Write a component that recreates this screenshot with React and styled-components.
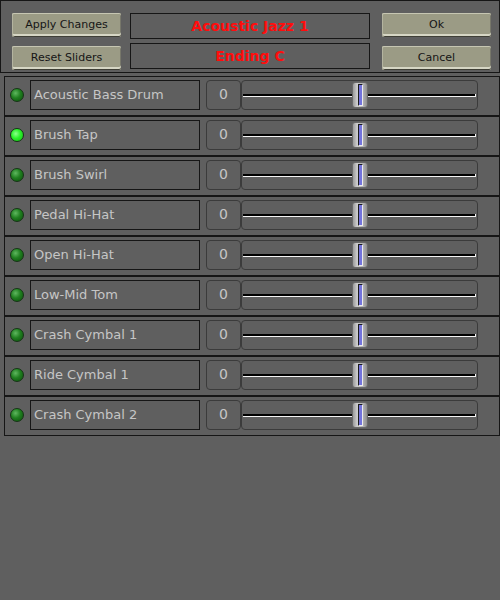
import React from "react";
import styled, { createGlobalStyle } from "styled-components";

const GlobalStyle = createGlobalStyle`
  html, body {
    margin: 0;
    padding: 0;
    background: #5f5f5f;
    font-family: "DejaVu Sans", "Liberation Sans", sans-serif;
  }
  #root {
    width: 500px;
    height: 600px;
    background: #5f5f5f;
  }
`;

const Header = styled.div`
  box-sizing: border-box;
  width: 500px;
  height: 73px;
  border: 1px solid #161616;
  padding: 12px 0 0 11px;
  display: flex;
  align-items: flex-start;
`;

const ButtonColumn = styled.div`
  display: flex;
  flex-direction: column;
  gap: 9px;
  margin-left: ${(p) => p.$offset || 0}px;
`;

const Button = styled.button`
  box-sizing: border-box;
  width: 109px;
  height: 24px;
  padding: 0 0 1px;
  border: none;
  border-radius: 2px;
  background: #9b9b85;
  color: #151515;
  font-family: "DejaVu Sans", sans-serif;
  font-size: 11px;
  box-shadow: inset 0 1px 0 #c6c6b2, inset 1px 0 0 #b4b4a0,
    inset 0 -1px 0 #3f3f36, inset 0 -3px 0 #d6d6c4, inset -1px 0 0 #77776a;
`;

const TitleColumn = styled.div`
  display: flex;
  flex-direction: column;
  gap: 4px;
  margin-left: 9px;
`;

const Title = styled.div`
  box-sizing: border-box;
  width: 240px;
  height: 26px;
  border: 1px solid #161616;
  color: #ff0d0d;
  font-weight: bold;
  font-size: 14px;
  display: flex;
  align-items: center;
  justify-content: center;
`;

const Panel = styled.div`
  margin: 3px 0 0 4px;
  width: 496px;
`;

const Row = styled.div`
  box-sizing: border-box;
  height: 40px;
  border: 1px solid #161616;
  display: flex;
  align-items: flex-start;
  padding: 3px 0 0 5px;
`;

const Led = styled.div`
  box-sizing: border-box;
  width: 14px;
  height: 14px;
  margin-top: 8px;
  border-radius: 50%;
  border: 1px solid #163516;
  background: ${(p) =>
    p.$on
      ? "radial-gradient(circle at 40% 40%, #8dff8d 0%, #2af02a 45%, #14b814 100%)"
      : "radial-gradient(circle at 38% 35%, #5fb75f 0%, #1f7f1f 45%, #0c4d0c 100%)"};
`;

const NameBox = styled.div`
  box-sizing: border-box;
  width: 170px;
  height: 30px;
  margin-left: 6px;
  border: 1px solid #161616;
  padding: 0 0 2px 3px;
  color: #c6c6c6;
  font-size: 13px;
  display: flex;
  align-items: center;
`;

const ValueBox = styled.div`
  box-sizing: border-box;
  width: 35px;
  height: 30px;
  margin-left: 6px;
  border: 1px solid #3b3b3b;
  border-radius: 4px;
  padding-bottom: 2px;
  color: #c6c6c6;
  font-size: 14px;
  display: flex;
  align-items: center;
  justify-content: center;
`;

const SliderBox = styled.div`
  box-sizing: border-box;
  width: 237px;
  height: 30px;
  border: 1px solid #3b3b3b;
  border-radius: 4px;
  padding: 0 1px;
  display: flex;
  align-items: center;
`;

const Track = styled.div`
  position: relative;
  flex: 1;
  height: 2px;
  background: #000;
  border-bottom: 1px solid #f4f4f4;
  border-right: 1px solid #f4f4f4;
  margin-top: 1px;
`;

const Knob = styled.div`
  position: absolute;
  top: -12px;
  left: 50%;
  transform: translateX(-7px);
  box-sizing: border-box;
  width: 16px;
  height: 26px;
  border-radius: 3px;
  border: 1px solid #6a6a6a;
  background: linear-gradient(to right, #9a9a9a, #cdcdcd 30%, #b4b4b4 70%, #8c8c8c);
  display: flex;
  justify-content: center;
  padding-top: 1px;
`;

const KnobGrip = styled.div`
  box-sizing: border-box;
  width: 5px;
  height: 22px;
  background: #7373dc;
  border-left: 1px solid #1c1c1c;
  border-top: 1px solid #1c1c1c;
  border-right: 1px solid #ececec;
  border-bottom: 1px solid #ececec;
`;

const drums = [
  { name: "Acoustic Bass Drum", on: false },
  { name: "Brush Tap", on: true },
  { name: "Brush Swirl", on: false },
  { name: "Pedal Hi-Hat", on: false },
  { name: "Open Hi-Hat", on: false },
  { name: "Low-Mid Tom", on: false },
  { name: "Crash Cymbal 1", on: false },
  { name: "Ride Cymbal 1", on: false },
  { name: "Crash Cymbal 2", on: false },
];

export default function App() {
  return (
    <>
      <GlobalStyle />
      <Header>
        <ButtonColumn>
          <Button>Apply Changes</Button>
          <Button>Reset Sliders</Button>
        </ButtonColumn>
        <TitleColumn>
          <Title>Acoustic Jazz 1</Title>
          <Title>Ending C</Title>
        </TitleColumn>
        <ButtonColumn $offset={12}>
          <Button>Ok</Button>
          <Button>Cancel</Button>
        </ButtonColumn>
      </Header>
      <Panel>
        {drums.map((d) => (
          <Row key={d.name}>
            <Led $on={d.on} />
            <NameBox>{d.name}</NameBox>
            <ValueBox>0</ValueBox>
            <SliderBox>
              <Track>
                <Knob>
                  <KnobGrip />
                </Knob>
              </Track>
            </SliderBox>
          </Row>
        ))}
      </Panel>
    </>
  );
}
